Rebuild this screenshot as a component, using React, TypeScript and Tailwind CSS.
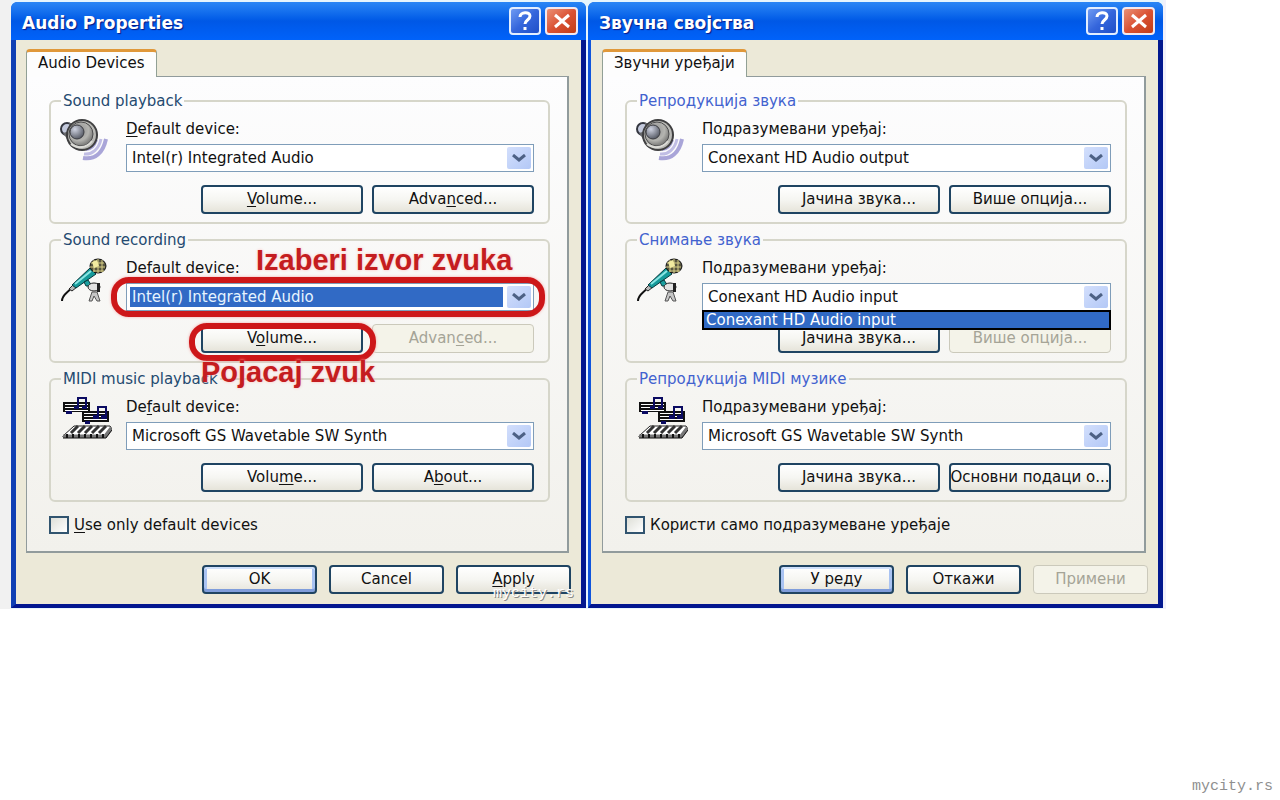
import { useId } from "react";
import type { ReactNode } from "react";
import clsx from "clsx";

type IconKind = "speaker" | "mic" | "midi";

interface DeviceGroup {
  icon: IconKind;
  legend: string;
  label: string;
  device: string;
  highlighted?: boolean;
  open?: boolean;
  note?: string;
  buttonNote?: string;
  primary: string;
  secondary: string;
  secondaryDisabled?: boolean;
}

interface DialogData {
  title: string;
  tab: string;
  groups: DeviceGroup[];
  checkbox: string;
  ok: string;
  cancel: string;
  apply: string;
  applyDisabled?: boolean;
  localized?: boolean;
  watermark?: string;
}

const english: DialogData = {
  title: "Audio Properties",
  tab: "Audio Devices",
  groups: [
    {
      icon: "speaker",
      legend: "Sound playback",
      label: "&Default device:",
      device: "Intel(r) Integrated Audio",
      primary: "&Volume...",
      secondary: "Adva&nced...",
    },
    {
      icon: "mic",
      legend: "Sound recording",
      label: "Default device:",
      device: "Intel(r) Integrated Audio",
      highlighted: true,
      note: "Izaberi izvor zvuka",
      buttonNote: "Pojacaj zvuk",
      primary: "V&olume...",
      secondary: "Advan&ced...",
      secondaryDisabled: true,
    },
    {
      icon: "midi",
      legend: "MIDI music playback",
      label: "De&fault device:",
      device: "Microsoft GS Wavetable SW Synth",
      primary: "Volu&me...",
      secondary: "A&bout...",
    },
  ],
  checkbox: "&Use only default devices",
  ok: "OK",
  cancel: "Cancel",
  apply: "&Apply",
  watermark: "mycity.rs",
};

const serbian: DialogData = {
  title: "Звучна својства",
  tab: "Звучни уређаји",
  localized: true,
  groups: [
    {
      icon: "speaker",
      legend: "Репродукција звука",
      label: "Подразумевани уређај:",
      device: "Conexant HD Audio output",
      primary: "Јачина звука...",
      secondary: "Више опција...",
    },
    {
      icon: "mic",
      legend: "Снимање звука",
      label: "Подразумевани уређај:",
      device: "Conexant HD Audio input",
      open: true,
      primary: "Јачина звука...",
      secondary: "Више опција...",
      secondaryDisabled: true,
    },
    {
      icon: "midi",
      legend: "Репродукција MIDI музике",
      label: "Подразумевани уређај:",
      device: "Microsoft GS Wavetable SW Synth",
      primary: "Јачина звука...",
      secondary: "Основни подаци о...",
    },
  ],
  checkbox: "Користи само подразумеване уређаје",
  ok: "У реду",
  cancel: "Откажи",
  apply: "Примени",
  applyDisabled: true,
};

/** Renders a caption whose character after "&" is the underlined access key. */
function Caption({ text }: { text: string }) {
  const at = text.indexOf("&");
  if (at < 0) return <>{text}</>;
  return (
    <>
      {text.slice(0, at)}
      <span className="underline underline-offset-2">{text[at + 1]}</span>
      {text.slice(at + 2)}
    </>
  );
}

function SpeakerIcon() {
  return (
    <svg width="50" height="44" viewBox="0 0 50 44" fill="none" aria-hidden="true">
      <defs>
        <radialGradient id="cone" cx="0.4" cy="0.35" r="0.7">
          <stop offset="0" stopColor="#8f8f90" />
          <stop offset="0.6" stopColor="#b4b4b0" />
          <stop offset="1" stopColor="#6b6b6a" />
        </radialGradient>
        <radialGradient id="cap" cx="0.35" cy="0.3" r="0.8">
          <stop offset="0" stopColor="#d0d4e2" />
          <stop offset="1" stopColor="#4a4e58" />
        </radialGradient>
      </defs>
      <path d="M23 39c12 2 20-5 23-19" stroke="#a9a5d8" strokeWidth="4" />
      <path d="M24 35c8 1 15-5 17-15" stroke="#c0bde4" strokeWidth="3" />
      <path d="M26 31c6 0 9-4 11-10" stroke="#a9a5d8" strokeWidth="2" />
      <circle cx="7" cy="10" r="6" fill="#c3c9dc" stroke="#33363f" strokeWidth="2" />
      <path d="M3 14l8 12 7-22-9 0 1 8z" fill="#66676b" />
      <ellipse cx="22" cy="16" rx="16" ry="16" fill="#3f3f40" />
      <ellipse cx="22" cy="16" rx="14" ry="14" fill="#b9b9b5" />
      <ellipse cx="21" cy="15" rx="12" ry="12" fill="url(#cone)" stroke="#4c4c4d" />
      <circle cx="17" cy="13" r="7" fill="url(#cap)" stroke="#3c3d42" />
      <path d="M11 25c6 5 16 4 21-3" stroke="#dcdcd7" strokeWidth="2" />
    </svg>
  );
}

function MicIcon() {
  return (
    <svg width="50" height="44" viewBox="0 0 50 44" fill="none" aria-hidden="true">
      <path d="M2 43c0-7 6-8 9-13" stroke="#111" strokeWidth="2" />
      <path d="M9 31l5-5 3 3-5 4z" fill="#b9b9b9" stroke="#222" />
      <path d="M12 27L30 10l6 6-20 14z" fill="#159a9a" stroke="#07383c" strokeWidth="1" />
      <path d="M15 26L31 13" stroke="#8be6e4" strokeWidth="2" />
      <path d="M24 24l4-2 4 6h-6z" fill="#1ba0a0" stroke="#07383c" />
      <ellipse cx="38" cy="8" rx="8" ry="7" fill="#57553f" stroke="#111" strokeWidth="1" />
      <path d="M31 5h13M30 9h15M33 13h11M34 2v12M38 1v14M42 2v12" stroke="#d8cf86" strokeWidth="1" />
      <path d="M32 4l5-2 2 6-5 2z" fill="#f1eaa0" />
      <ellipse cx="34" cy="29" rx="6" ry="4" fill="#e2e2e2" stroke="#222" />
      <path d="M37 25h3v9h-3z" fill="#222" />
      <path d="M32 34l-3 9h3l2-5 3 5h3l-3-9z" fill="#c6c6c6" stroke="#555" />
    </svg>
  );
}

function MidiIcon() {
  return (
    <svg width="52" height="44" viewBox="0 0 52 44" fill="none" aria-hidden="true">
      <path d="M3 5h27v10H3z" fill="#111" />
      <path d="M5 7h23v1H5zM5 10h23v1H5zM5 13h23v1H5z" fill="#fff" />
      <path d="M18 10V1h8v9" stroke="#0b0b62" strokeWidth="2" />
      <path d="M14 9h5v3h-5zM22 9h5v3h-5zM6 14h6v3H6z" fill="#0b0b62" />
      <path d="M22 14h27v11H22z" fill="#111" />
      <path d="M24 16h23v1H24zM24 19h23v1H24zM24 22h23v1H24z" fill="#fff" />
      <path d="M38 19v-9h8v9" stroke="#0b0b62" strokeWidth="2" />
      <path d="M33 18h6v4h-6zM41 18h6v4h-6zM25 24h5v3h-5z" fill="#0b0b62" />
      <path d="M3 39l11-10h36l2 3-6 8H3z" fill="#fff" stroke="#222" strokeWidth="1" />
      <path d="M11 36l7-7M18 36l7-7M25 36l7-7M32 36l7-7M39 36l7-7" stroke="#333" strokeWidth="3" />
      <path d="M3 39h42l6-8" stroke="#777" strokeWidth="3" />
      <path d="M3 41h43l6-8" stroke="#111" strokeWidth="1" />
      <path d="M7 37v4M13 37v4M19 37v4M25 37v4M31 37v4M37 37v4M43 37v4" stroke="#111" strokeWidth="2" />
    </svg>
  );
}

const icons: Record<IconKind, () => ReactNode> = {
  speaker: SpeakerIcon,
  mic: MicIcon,
  midi: MidiIcon,
};

function PushButton({
  text,
  disabled,
  isDefault,
  className,
}: {
  text: string;
  disabled?: boolean;
  isDefault?: boolean;
  className?: string;
}) {
  return (
    <button
      type="button"
      disabled={disabled}
      className={clsx(
        "flex h-[29px] items-center justify-center overflow-hidden rounded-[4px] whitespace-nowrap",
        disabled
          ? "border border-[#cbc9bb] bg-[#f4f3e9] text-[#a5a497]"
          : "border-2 border-[#1f4462] bg-linear-to-b from-white via-[#f6f6f2] to-[#e6e4da] text-[#111]",
        isDefault && "shadow-[inset_0_2px_0_#cfe0fb,inset_0_-3px_0_#7f9ddb,inset_3px_0_0_#a9c3f2,inset_-3px_0_0_#a9c3f2]",
        className,
      )}
    >
      <span>
        <Caption text={text} />
      </span>
    </button>
  );
}

function DeviceSelect({ id, group }: { id: string; group: DeviceGroup }) {
  return (
    <div className="relative flex h-7 items-center gap-1 border border-[#7f9db9] bg-white p-[3px] pr-[2px]">
      <select
        id={id}
        className={clsx(
          "h-5 min-w-0 flex-1 appearance-none pl-[2px] leading-5 outline-none",
          group.highlighted ? "bg-[#316ac5] text-[#e6f4ff]" : "bg-white text-[#111]",
        )}
      >
        <option>{group.device}</option>
      </select>
      <span className="pointer-events-none flex h-[22px] w-6 items-center justify-center rounded-[2px] bg-linear-to-br from-[#d3dffc] to-[#b3c8f6]">
        <svg width="16" height="8" viewBox="0 0 16 8" fill="none" aria-hidden="true">
          <path d="M2 1l6 5 6-5" stroke="#4d6185" strokeWidth="3" />
        </svg>
      </span>
      {group.open && (
        <ul className="absolute top-full -right-px -left-px z-10 border-2 border-black bg-[#316ac5] pl-[2px] leading-4 text-white">
          <li>{group.device}</li>
        </ul>
      )}
      {group.highlighted && (
        <span className="pointer-events-none absolute -top-[7px] -right-3 -bottom-[7px] -left-4 rounded-[18px] border-[6px] border-[#cd1719] shadow-[0_0_3px_#f6a5a5]" />
      )}
    </div>
  );
}

function AnnotationText({ children, className }: { children: string; className: string }) {
  return (
    <span
      className={clsx(
        "pointer-events-none absolute z-10 font-['Liberation_Sans',Arial,sans-serif] text-[29px] leading-7 font-bold whitespace-nowrap text-[#c41d20] [text-shadow:0_0_3px_#ffb9b9]",
        className,
      )}
    >
      {children}
    </span>
  );
}

function GroupBox({ group, localized }: { group: DeviceGroup; localized?: boolean }) {
  const id = useId();
  const Icon = icons[group.icon];
  return (
    <fieldset className="min-w-0 rounded-[6px] border-2 border-[#d6d6ca] pr-[14px] pb-2 pl-[9px]">
      <legend className={clsx("ml-px px-[2px] leading-5", localized ? "text-[#4262cf]" : "text-[#244a70]")}>
        {group.legend}
      </legend>
      <div className="flex gap-4">
        <div className="w-[50px] shrink-0 pt-2">
          <Icon />
        </div>
        <div className="relative min-w-0 flex-1 pt-[9px]">
          <label htmlFor={id} className="block leading-[18px]">
            <Caption text={group.label} />
          </label>
          {group.note && <AnnotationText className="top-[-4px] left-[130px]">{group.note}</AnnotationText>}
          <div className="pt-[6px]">
            <DeviceSelect id={id} group={group} />
          </div>
          <div className="flex justify-end gap-[9px] pt-[13px]">
            <div className="relative w-[162px]">
              <PushButton text={group.primary} className="w-full" />
              {group.buttonNote && (
                <>
                  <span className="pointer-events-none absolute -top-px -right-[13px] -bottom-2 -left-3 rounded-[18px] border-[6px] border-[#cd1719] shadow-[0_0_3px_#f6a5a5]" />
                  <AnnotationText className="top-[34px] left-0">{group.buttonNote}</AnnotationText>
                </>
              )}
            </div>
            <PushButton text={group.secondary} disabled={group.secondaryDisabled} className="w-[162px]" />
          </div>
        </div>
      </div>
    </fieldset>
  );
}

function TitleBar({ title }: { title: string }) {
  return (
    <header className="flex h-[38px] items-center justify-between rounded-t-[6px] bg-linear-to-b from-[#2a86f5] via-[#0058e6] to-[#0062fa] pr-2 pl-[11px]">
      <h1 className="pt-1 text-[17px] leading-6 font-bold text-white [text-shadow:1px_1px_1px_#0a1883]">{title}</h1>
      <div className="flex gap-1">
        <button
          type="button"
          aria-label="Help"
          className="flex h-7 w-8 items-center justify-center rounded-[4px] border-2 border-[#e2eeff] bg-linear-to-br from-[#6f9af2] via-[#3566dc] to-[#1f4fc8]"
        >
          <svg width="18" height="20" viewBox="0 0 18 20" fill="none" stroke="#fff" strokeWidth="3" aria-hidden="true">
            <path d="M4 6c0-5 10-6 10-1 0 4-5 4-5 8" />
            <path d="M9 16v3" />
          </svg>
        </button>
        <button
          type="button"
          aria-label="Close"
          className="flex h-7 w-[33px] items-center justify-center rounded-[4px] border-2 border-[#f2e9f0] bg-linear-to-br from-[#ea8f74] via-[#da5234] to-[#c13c16]"
        >
          <svg width="18" height="16" viewBox="0 0 18 16" fill="none" stroke="#fff" strokeWidth="3" aria-hidden="true">
            <path d="M2 2l14 12M16 2L2 14" />
          </svg>
        </button>
      </div>
    </header>
  );
}

function AudioDialog({ data }: { data: DialogData }) {
  const checkId = useId();
  return (
    <section className="relative min-w-0 flex-1 rounded-t-[7px] bg-[#0a35b8]">
      <TitleBar title={data.title} />
      <div
        className={clsx(
          "border-r-[5px] border-b-4 border-r-[#02188f] border-b-[#02168f] bg-[#ece9d8] pt-[9px] pr-3 pb-[10px]",
          data.localized ? "border-l-[3px] border-l-[#0f55dc] pl-[11px]" : "border-l-[5px] border-l-[#0f3fb4] pl-[10px]",
        )}
      >
        <div role="tablist" className="flex">
          <button
            type="button"
            role="tab"
            aria-selected="true"
            className="relative z-10 -mb-px h-7 rounded-t-[4px] border border-t-[3px] border-b-0 border-[#91a095] border-t-[#e0983a] bg-[#fdfdfd] px-[11px] pb-1 leading-5"
          >
            {data.tab}
          </button>
        </div>
        <div
          role="tabpanel"
          className="border border-r-2 border-b-2 border-[#919b9c] bg-linear-to-b from-[#fdfdfe] to-[#f2f1ec] pt-[14px] pr-[17px] pb-[17px] pl-[22px]"
        >
          <div className="flex flex-col gap-[6px]">
            {data.groups.map((group) => (
              <GroupBox key={group.legend} group={group} localized={data.localized} />
            ))}
          </div>
          <div className="flex items-center gap-[5px] pt-[14px]">
            <input
              id={checkId}
              type="checkbox"
              className="h-[18px] w-5 appearance-none border-2 border-[#31546f] bg-linear-to-br from-[#dedfd8] to-white"
            />
            <label htmlFor={checkId} className="leading-[18px]">
              <Caption text={data.checkbox} />
            </label>
          </div>
        </div>
        <div className="-mr-[2px] flex justify-end gap-3 pt-3">
          <PushButton text={data.ok} isDefault className="w-[115px]" />
          <PushButton text={data.cancel} className="w-[115px]" />
          <PushButton text={data.apply} disabled={data.applyDisabled} className="w-[115px]" />
        </div>
      </div>
      {data.watermark && (
        <span className="absolute right-3 bottom-1 font-['Liberation_Mono','Courier_New',monospace] text-[15px] leading-5 text-white [text-shadow:1px_1px_0_#8a8a88]">
          {data.watermark}
        </span>
      )}
    </section>
  );
}

export default function App() {
  return (
    <main className="flex min-h-screen flex-col justify-between bg-white font-['DejaVu_Sans',Verdana,sans-serif] text-[15px] text-[#111]">
      <div className="mr-[114px] flex gap-[2px] border-r-[3px] border-l-[11px] border-r-[#f1f1fb] border-l-[#f1f1f1] bg-[#e6f5fd] pt-[2px] pb-px">
        <AudioDialog data={english} />
        <AudioDialog data={serbian} />
      </div>
      <footer className="flex justify-end pr-[7px] pb-[3px] font-['Liberation_Mono','Courier_New',monospace] text-[15px] leading-5 text-[#8f8f8f]">
        mycity.rs
      </footer>
    </main>
  );
}
